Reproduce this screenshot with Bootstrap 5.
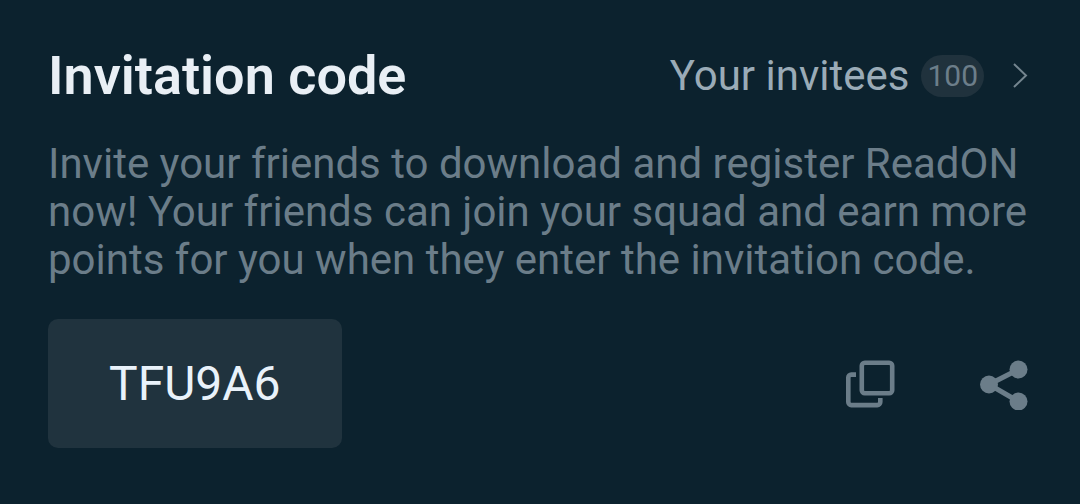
<!DOCTYPE html>
<html lang="en">
<head>
<meta charset="utf-8">
<meta name="viewport" content="width=device-width, initial-scale=1">
<title>Invitation code</title>
<link href="https://cdn.jsdelivr.net/npm/bootstrap@5.3.0/dist/css/bootstrap.min.css" rel="stylesheet">
<style>
  body { background: #0c222e; color: #e9eff5; font-family: Roboto, "Liberation Sans", sans-serif; }
  .invite-panel { padding: 48px 52px 48px 48px; }
  .invite-title { font-size: 54px; line-height: 56px; font-weight: 600; }
  .invitees-link { color: #9aabb7; font-size: 42px; line-height: 56px; }
  .invitees-link:hover { color: #b5c3cd; }
  .invitees-count { background: #20323d; color: #6c7e8a; font-size: 30px; line-height: 42px; padding: 0 6px; margin: 0 28px 0 12px; }
  .invite-text { color: #6b7d89; font-size: 42px; line-height: 48px; margin: 36px 0 35px; }
  .code-box { background: #20333e; color: #e9f2fa; font-size: 48px; line-height: 57px; padding: 36px 61px; border-radius: 10px; }
  .icon-button { color: #6b7d89; line-height: 0; }
  .invite-actions { gap: 84px; }
</style>
</head>
<body>
<main class="invite-panel">
  <header class="d-flex align-items-center justify-content-between">
    <h1 class="invite-title m-0">Invitation code</h1>
    <a href="#" class="invitees-link d-flex align-items-center text-decoration-none">
      Your invitees
      <span class="invitees-count rounded-pill">100</span>
      <svg width="16" height="26" viewBox="0 0 16 26" fill="none" stroke="#74858f" stroke-width="2" aria-hidden="true"><path d="M2 1 14 12.500 2 24"/></svg>
    </a>
  </header>
  <p class="invite-text">Invite your friends to download and register ReadON now! Your friends can join your squad and earn more points for you when they enter the invitation code.</p>
  <div class="d-flex align-items-center justify-content-between">
    <div class="code-box">TFU9A6</div>
    <div class="invite-actions d-flex align-items-center">
      <button type="button" class="icon-button btn p-0 border-0" aria-label="Copy code">
        <svg width="50" height="50" viewBox="0 0 50 50" fill="none" stroke="currentColor" stroke-width="4.6"><rect x="15.800" y="3.800" width="30.400" height="30.400" rx="3"/><path d="M10 15.600H5.300a3 3 0 0 0-3 3v24.500a3 3 0 0 0 3 3h26a3 3 0 0 0 3-3v-4"/></svg>
      </button>
      <button type="button" class="icon-button btn p-0 border-0" aria-label="Share code">
        <svg width="48" height="52" viewBox="0 0 48 52" fill="currentColor"><path d="M38.500 11.500 9 26.500 38.500 43.500" fill="none" stroke="currentColor" stroke-width="5"/><circle cx="9" cy="26.500" r="9"/><circle cx="38.500" cy="11.500" r="9"/><circle cx="38.500" cy="43.500" r="9"/></svg>
      </button>
    </div>
  </div>
</main>
<script src="https://cdn.jsdelivr.net/npm/bootstrap@5.3.0/dist/js/bootstrap.bundle.min.js"></script>
</body>
</html>
